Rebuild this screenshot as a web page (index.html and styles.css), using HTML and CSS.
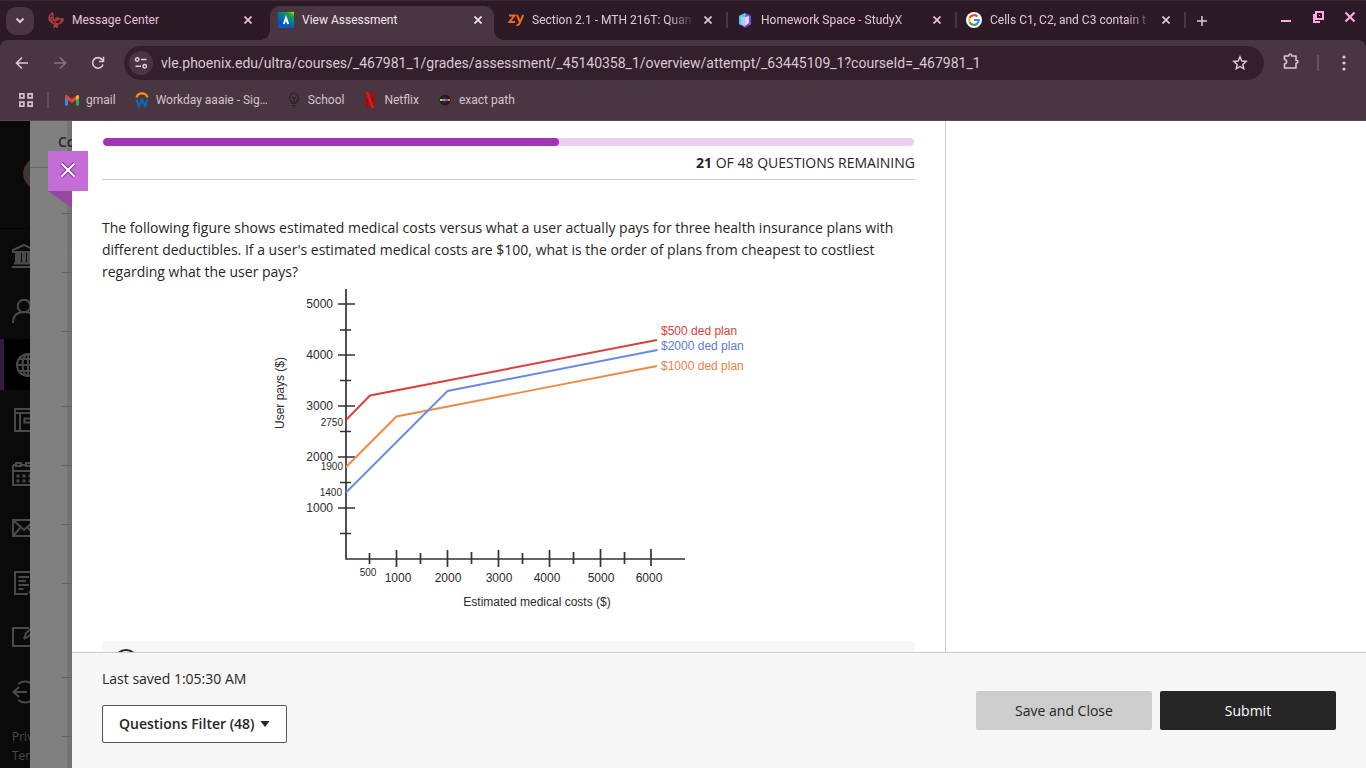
FILE: index.html
```html
<!DOCTYPE html>
<html lang="en">
<head>
<meta charset="utf-8">
<title>View Assessment</title>
<link rel="stylesheet" href="styles.css">
</head>
<body>
<header class="browser">
  <div class="tabstrip">
    <button class="tab-search" aria-label="Search tabs"><svg width="10" height="7" viewBox="0 0 10 7"><path d="M1.500 1.500 5 5l3.500-3.500" fill="none" stroke="currentColor" stroke-width="2"/></svg></button>
    <div class="tabs">
      <div class="tab">
        <svg class="fav" viewBox="0 0 16 16"><g fill="none" stroke="#a83c3c" stroke-width="1.500"><path d="M5 .5C1 3 0 6 2 9l3 2.500 3-2M4.800 1v3.500L3 6M5 4.500l.5 3.500 2.500.5M1 5l3 3M1.500 8l3.500 1.500M7 8c1-2 2-2.500 3-2l-1 2 2-1h4.500l-2 1.500h2l-3 1.500h2L10 12H6.500M7 11l-1 4.500 2-2 1 2 1-4M8.500 11v2.500"/></g></svg>
        <span class="tab-title">Message Center</span>
        <button class="tab-close" aria-label="Close tab"><svg width="8" height="8" viewBox="0 0 8 8"><path d="M.5.5l7 7m0-7l-7 7" stroke="currentColor" stroke-width="1.700"/></svg></button>
      </div>
      <div class="tab active">
        <svg class="fav" viewBox="0 0 16 16"><defs><linearGradient id="bb" x1="1" y1="0" x2=".3" y2="1"><stop offset="0" stop-color="#d8e800"/><stop offset=".2" stop-color="#24a33b"/><stop offset=".5" stop-color="#087c98"/><stop offset=".75" stop-color="#0757c4"/></linearGradient></defs><path fill="url(#bb)" d="M0 0h16v16H0z"/><path d="M5.800 12 8 6l2.200 6" fill="none" stroke="#fff" stroke-width="2"/></svg>
        <span class="tab-title">View Assessment</span>
        <button class="tab-close" aria-label="Close tab"><svg width="8" height="8" viewBox="0 0 8 8"><path d="M.5.5l7 7m0-7l-7 7" stroke="currentColor" stroke-width="1.700"/></svg></button>
      </div>
      <div class="tab split">
        <svg class="fav" viewBox="0 0 16 16"><path d="M1 3.500h5.500L1.500 10H7M9 3l3 7M15.200 3 11.500 11.500q-1 2-3 1.500" fill="none" stroke="#f26a1b" stroke-width="2"/></svg>
        <span class="tab-title">Section 2.1 - MTH 216T: Quan</span>
        <button class="tab-close" aria-label="Close tab"><svg width="8" height="8" viewBox="0 0 8 8"><path d="M.5.5l7 7m0-7l-7 7" stroke="currentColor" stroke-width="1.700"/></svg></button>
      </div>
      <div class="tab split">
        <svg class="fav" viewBox="0 0 16 16"><path fill="#6c8cf0" d="M8 1l6 3v8l-6 3.500L2 12V4z"/><path fill="#41d3ea" d="M8 1v7L2 4zM2 4l2 1v8l-2-1z"/><path fill="#7949ed" d="M8 1l6 3v8l-6 3.500 3-9z"/><path fill="#e7d3ff" d="M7.500 5.500 12 4v7l-4.500 3z"/><path fill="#b9c5ff" d="M4 4.500l3.500 1V14L4 12z"/></svg>
        <span class="tab-title">Homework Space - StudyX</span>
        <button class="tab-close" aria-label="Close tab"><svg width="8" height="8" viewBox="0 0 8 8"><path d="M.5.5l7 7m0-7l-7 7" stroke="currentColor" stroke-width="1.700"/></svg></button>
      </div>
      <div class="tab split">
        <svg class="fav" viewBox="0 0 16 16"><circle cx="8" cy="8" r="8" fill="#fff"/><g fill="none" stroke-width="2.200"><path stroke="#ea4335" d="M3.700 5.800a4.800 4.800 0 0 1 7.700-1.200"/><path stroke="#fbbc05" d="M3.700 10.200a4.800 4.800 0 0 1 0-4.400"/><path stroke="#34a853" d="M3.700 10.200a4.800 4.800 0 0 0 7.500 1.400"/><path stroke="#4285f4" d="M8 8h4.800a4.800 4.800 0 0 1-1.600 3.600"/></g></svg>
        <span class="tab-title">Cells C1, C2, and C3 contain t</span>
        <button class="tab-close" aria-label="Close tab"><svg width="8" height="8" viewBox="0 0 8 8"><path d="M.5.5l7 7m0-7l-7 7" stroke="currentColor" stroke-width="1.700"/></svg></button>
      </div>
    </div>
    <button class="new-tab" aria-label="New tab"><svg width="10" height="10" viewBox="0 0 10 10"><path d="M5 0v10M0 5h10" stroke="currentColor" stroke-width="1.500"/></svg></button>
    <div class="window-controls">
      <button aria-label="Minimize"><svg width="12" height="12" viewBox="0 0 12 12"><path d="M1 10h10" stroke="currentColor" stroke-width="2"/></svg></button>
      <button aria-label="Restore"><svg width="12" height="12" viewBox="0 0 12 12"><path d="M4 1h7v7H4zM2 3v8h6" fill="none" stroke="currentColor" stroke-width="2"/><path d="M7 4h1v1H7z" fill="currentColor"/></svg></button>
      <button aria-label="Close window"><svg width="12" height="12" viewBox="0 0 12 12"><path d="M1.500 1.500l9 9m0-9l-9 9" stroke="currentColor" stroke-width="2.200"/></svg></button>
    </div>
  </div>
  <div class="toolbar">
    <button class="tool" aria-label="Back"><svg width="14" height="14" viewBox="0 0 14 14"><path d="M13 7H2M7 1.500 1.500 7 7 12.500" fill="none" stroke="currentColor" stroke-width="1.600"/></svg></button>
    <button class="tool dim" aria-label="Forward"><svg width="14" height="14" viewBox="0 0 14 14"><path d="M1 7h11M7 1.500 12.500 7 7 12.500" fill="none" stroke="currentColor" stroke-width="1.600"/></svg></button>
    <button class="tool" aria-label="Reload"><svg width="14" height="14" viewBox="0 0 14 14"><path d="M12 8.500A5.300 5.300 0 1 1 11 3.500L12.500 5M12.500.8V5.500H8" fill="none" stroke="currentColor" stroke-width="1.600"/></svg></button>
    <div class="address">
      <button class="site-info" aria-label="Site information"><svg width="14" height="14" viewBox="0 0 14 14"><g fill="none" stroke="currentColor" stroke-width="1.500"><circle cx="3.200" cy="3.500" r="1.700"/><path d="M7 3.500h5.500M1.500 10.300H7"/><circle cx="10.700" cy="10.300" r="1.700"/></g></svg></button>
      <input class="url" type="text" aria-label="Address" value="vle.phoenix.edu/ultra/courses/_467981_1/grades/assessment/_45140358_1/overview/attempt/_63445109_1?courseId=_467981_1">
      <button class="star" aria-label="Bookmark this page"><svg width="16" height="16" viewBox="0 0 16 16"><path d="M8 1.800 9.800 6l4.400.4-3.400 3 1 4.400L8 11.500l-3.800 2.300 1-4.400-3.400-3L6.200 6z" fill="none" stroke="currentColor" stroke-width="1.400"/></svg></button>
    </div>
    <button class="tool ext" aria-label="Extensions"><svg width="18" height="18" viewBox="0 0 18 18"><path d="M2.500 4h4.200q.2-2 1.500-2t1.500 2h4.300v4.300q2 .2 2 1.500t-2 1.500v4.700H2.500v-4q2.200-.5 2.200-2.300t-2.200-2.200z" fill="none" stroke="currentColor" stroke-width="1.600" stroke-linejoin="round"/></svg></button>
    <span class="divider"></span>
    <button class="tool menu" aria-label="Menu"><svg width="4" height="16" viewBox="0 0 4 16"><g fill="currentColor"><circle cx="2" cy="2" r="1.600"/><circle cx="2" cy="8" r="1.600"/><circle cx="2" cy="14" r="1.600"/></g></svg></button>
  </div>
  <nav class="bookmarks" aria-label="Bookmarks">
    <button class="apps" aria-label="Apps"><svg width="14" height="14" viewBox="0 0 14 14"><g fill="none" stroke="currentColor" stroke-width="1.700"><path d="M.9.9h4v4h-4zM9.100.9h4v4h-4zM.9 9.100h4v4h-4zM9.100 9.100h4v4h-4z"/></g></svg></button>
    <span class="divider"></span>
    <a class="bookmark" href="#"><svg class="fav" viewBox="0 0 16 16"><path fill="#4285f4" d="M1 5l3 2v6.500H1z"/><path fill="#34a853" d="M15 5l-3 2v6.500h3z"/><path fill="#fbbc04" d="M12 4q3-2.500 3 1v1l-3 2z"/><path fill="#ea4335" d="M1 6V4.500Q1 1.500 4 4l4 3 4-3v4l-4 3-4-3z"/></svg>gmail</a>
    <a class="bookmark" href="#"><svg class="fav" viewBox="0 0 16 16"><path d="M2.500 5.500a5.700 5.700 0 0 1 11 0" fill="none" stroke="#f5900c" stroke-width="2.200"/><path d="M2.500 7.500 5 14 8 8l3 6 2.500-6.500" fill="none" stroke="#0868b9" stroke-width="2.300"/></svg>Workday aaaie - Sig…</a>
    <a class="bookmark" href="#"><svg class="fav" viewBox="0 0 16 16"><path d="M6 11.500C6 9 3.500 8.500 3.500 5.500a4.500 4.500 0 0 1 9 0c0 3-2.500 3.500-2.500 6zM6 13.500h4M7 15.500h2M8 11V6M6 5l2 2 2-2" fill="none" stroke="#272025" stroke-width="1.200"/></svg>School</a>
    <a class="bookmark" href="#"><svg class="fav" viewBox="0 0 16 16"><path fill="#a90710" d="M3.500 0h3v16l-3 .3zM9.500 0h3v16.300l-3-.3z"/><path fill="#ed1018" d="M3.500 0h3l6 16.300-3-.3z"/></svg>Netflix</a>
    <a class="bookmark" href="#"><svg class="fav" viewBox="0 0 16 16"><circle cx="8" cy="8" r="5.500" fill="#211b20"/><path d="M6.500 6h3M6.500 10h3" stroke="#50424b"/><path fill="#b9d42b" d="M3 7h2v2H3z"/><path fill="#20bdd8" d="M5 7h3v2H5z"/><path fill="#ed218b" d="M8 7h3v2H8z"/><path fill="#f58233" d="M11 7h2v2h-2z"/></svg>exact path</a>
  </nav>
</header>
<div class="page">
  <aside class="rail">
    <div class="profile"><span class="avatar"></span></div>
    <nav class="rail-nav" aria-label="Main">
      <a href="#" aria-label="Institution"><svg viewBox="0 0 24 24"><path d="M1 6 12 1l11 5v2H1zM4 8v11M8 8v11M6 8v11M11 8v11M13 8v11M16 8v11M18 8v11M20 8v11M2 19.500h20M0 23h24"/></svg></a>
      <a href="#" aria-label="Profile"><svg viewBox="0 0 24 24"><circle cx="12" cy="7" r="6.300"/><path d="M1 24q0-11 11-11t11 11"/></svg></a>
      <a href="#" class="current" aria-label="Activity"><svg class="globe" viewBox="0 0 24 24"><circle cx="12" cy="12" r="11"/><path d="M12 1v22M1 12h22M3 6h18M3 18h18"/><ellipse cx="12" cy="12" rx="5.500" ry="11"/></svg></a>
      <a href="#" aria-label="Courses"><svg viewBox="0 0 24 24"><path d="M3 1h21v22H3zM3 5h21M8 5v18M12.500 10.500H24v4H12.500z"/></svg></a>
      <a href="#" aria-label="Calendar"><svg viewBox="0 0 24 24"><path d="M1 3h3M9 3h5M1 3v20h22V3M1 9h22"/><path d="M4 1h5v3H4zM14 1h5v3h-5z"/><path d="M4.500 14h3m3 0h3m3 0h3m-15 5h3m3 0h3m3 0h3" stroke-width="3"/></svg></a>
      <a href="#" aria-label="Messages"><svg viewBox="0 0 24 24"><path d="M1 4h22v16H1zM1 4l11 10L23 4M1 20l8-9M23 20l-8-9"/></svg></a>
      <a href="#" aria-label="Grades"><svg viewBox="0 0 24 24"><path d="M16 23H3V1h18v15M6.500 6H17M6.500 10H14M6.500 14H17M6.500 18h5M17 22l3-3"/></svg></a>
      <a href="#" aria-label="Tools"><svg viewBox="0 0 24 24"><path d="M17 3H1v18h22M12 14l2-6 8-7M12 14l5-3 7-7"/></svg></a>
      <a href="#" aria-label="Sign out"><svg viewBox="0 0 24 24"><path d="M6 4a11 11 0 0 1 15 1M6 20a11 11 0 0 0 15-1M15 12H1M7 7l-5.500 5L7 17"/></svg></a>
    </nav>
    <div class="rail-links"><a href="#">Privacy</a><a href="#">Terms</a></div>
  </aside>
  <section class="underlay" aria-hidden="true">
    <div class="underlay-head">Course</div>
    <svg class="row-lines" width="10" height="600" viewBox="0 168 10 600"><path d="M0 213.500h10M0 272.500h10M0 331.500h10M0 406.500h10M0 465.500h10M0 524.500h10M0 583.500h10M0 677.500h10M0 736.500h10" stroke="#606060"/></svg>
  </section>
  <main class="panel">
    <button class="panel-close" aria-label="Close assessment"><svg width="16" height="16" viewBox="0 0 16 16"><path d="M1.500 1.500l13 13m0-13l-13 13" stroke="#82319a" stroke-width="4"/><path d="M1.500 1.500l13 13m0-13l-13 13" stroke="#fff" stroke-width="2"/></svg></button>
    <div class="content">
      <section class="questions">
        <div class="progress" role="progressbar" aria-label="Questions answered" aria-valuemin="0" aria-valuemax="48" aria-valuenow="27"><div class="progress-fill" style="width:56.25%"></div></div>
        <p class="remaining"><b>21</b> OF 48 QUESTIONS REMAINING</p>
        <p class="prompt">The following figure shows estimated medical costs versus what a user actually pays for three health insurance plans with different deductibles. If a user's estimated medical costs are $100, what is the order of plans from cheapest to costliest regarding what the user pays?</p>
        <svg class="chart" width="481" height="334" viewBox="268 283 481 334" role="img" aria-label="User pays versus estimated medical costs">
          <g class="axis">
            <path d="M346 289v270h339"/>
            <path d="M338 304h17M338 355h17M338 406h17M338 457h17M338 508h17M340 330h11M340 380.500h11M340 431.500h11M340 482.500h11M340 533.500h11"/>
            <path d="M396.500 550v17M447.500 550v17M498.500 550v17M549.500 550v17M600.500 549v18M651 549v17M369.500 553v11M420.500 553v11M471.500 552v12M522.500 553v11M573.500 552v12M624.500 552v12"/>
          </g>
          <g fill="none" stroke-width="1.900">
            <path stroke="#ed8947" d="M346 467l50.500-50.500L657 366"/>
            <path stroke="#678ae6" d="M346 492.500 447.500 391 657.500 350"/>
            <path stroke="#dd3e39" d="M346 420l24-24.500 287-55.500"/>
          </g>
          <g class="labels" text-anchor="end">
            <text x="333" y="308">5000</text><text x="333" y="359">4000</text><text x="333" y="410">3000</text><text x="333" y="461">2000</text><text x="333" y="512">1000</text>
          </g>
          <g class="labels small" text-anchor="end">
            <text x="343" y="426">2750</text><text x="343" y="470">1900</text><text x="342" y="496">1400</text>
          </g>
          <g class="labels" text-anchor="middle">
            <text class="mid" x="368" y="576">500</text>
            <text x="398" y="582">1000</text><text x="448" y="582">2000</text><text x="499" y="582">3000</text><text x="547" y="582">4000</text><text x="601" y="582">5000</text><text x="649" y="582">6000</text>
            <text x="537" y="606">Estimated medical costs ($)</text>
            <text transform="translate(284 393) rotate(-90)">User pays ($)</text>
          </g>
          <g class="labels">
            <text x="661" y="335" class="red">$500 ded plan</text><text x="661" y="350" class="blue">$2000 ded plan</text><text x="661" y="370" class="orange">$1000 ded plan</text>
          </g>
        </svg>
        <label class="answer"><input type="radio" name="answer" aria-label="Answer A"></label>
      </section>
      <aside class="side"></aside>
    </div>
    <footer class="actions">
      <div class="status">
        <span>Last saved 1:05:30 AM</span>
        <button class="filter">Questions Filter (48)<svg width="10" height="6" viewBox="0 0 10 6"><path d="M.5 0h9L5 6z" fill="currentColor"/></svg></button>
      </div>
      <div class="buttons">
        <button class="btn save">Save and Close</button>
        <button class="btn submit">Submit</button>
      </div>
    </footer>
  </main>
</div>
</body>
</html>
```
FILE: styles.css
```css
* { box-sizing: border-box; }
body {
  margin: 0;
  height: 100vh;
  display: flex;
  flex-direction: column;
  overflow: hidden;
  font-family: "Open Sans", "Noto Sans", sans-serif;
  font-size: 14px;
  color: #262626;
}
button {
  font: inherit;
  color: inherit;
  border: 0;
  padding: 0;
  margin: 0;
  background: none;
  display: flex;
  align-items: center;
  justify-content: center;
}
a { color: inherit; text-decoration: none; }
p { margin: 0; }
svg { flex: none; }

/* Browser chrome */
.browser {
  flex: none;
  background: #2c1a27;
  color: #e6c4d7;
  font-family: Roboto, sans-serif;
  font-size: 12px;
}
.tabstrip {
  height: 40px;
  display: flex;
  align-items: center;
  border-top: 1px solid #3b2935;
}
.tab-search {
  width: 28px;
  height: 28px;
  margin: 0 6px;
  border-radius: 10px;
  background: #4a3641;
}
.tabs { display: flex; align-self: stretch; }
.tab {
  position: relative;
  width: 230px;
  padding: 0 18px 2px 8px;
  display: flex;
  align-items: center;
  gap: 8px;
}
.tab.split { width: 229px; padding-right: 17px; }
.fav { width: 16px; height: 16px; }
.tab-title {
  flex: 1;
  overflow: hidden;
  white-space: nowrap;
}
.tab.split .tab-title {
  mask-image: linear-gradient(to right, #000 calc(100% - 28px), transparent);
}
.tab-close { width: 8px; height: 16px; }
.tab.split::after {
  content: "";
  position: absolute;
  right: 1px;
  top: 11px;
  width: 2px;
  height: 16px;
  background: #4a3641;
}
.tab.active {
  width: 224px;
  margin: 5px 6px 0 0;
  padding: 0 12px 7px 8px;
  border-radius: 10px 10px 0 0;
  background: #4a3641;
  color: #f6e5ef;
}
.tab.active::before,
.tab.active::after {
  content: "";
  position: absolute;
  bottom: 0;
  width: 10px;
  height: 10px;
}
.tab.active::before {
  right: 100%;
  background: radial-gradient(circle at 0 0, transparent 10px, #4a3641 10px);
}
.tab.active::after {
  left: 100%;
  background: radial-gradient(circle at 100% 0, transparent 10px, #4a3641 10px);
}
.new-tab { width: 24px; height: 24px; margin-left: 3px; }
.window-controls {
  margin-left: auto;
  padding: 0 10px 7px 0;
  display: flex;
  gap: 20px;
  color: #ffa8e4;
}
.toolbar {
  height: 41px;
  padding: 0 14px;
  display: flex;
  align-items: center;
  border-radius: 8px 8px 0 0;
  background: #4a3641;
}
.tool { width: 16px; height: 28px; margin-right: 22px; }
.tool.dim { color: #8b7280; }
.address {
  flex: 1;
  height: 34px;
  margin-top: 4px;
  padding: 0 16px 0 5px;
  display: flex;
  align-items: center;
  gap: 8px;
  border-radius: 17px;
  background: #33202c;
  color: #e2cfda;
}
.tool.dim + .tool { margin-right: 18px; }
.toolbar .tool, .toolbar .divider { margin-top: 4px; }
.site-info {
  width: 24px;
  height: 24px;
  border-radius: 12px;
  background: #4a3641;
}
.url {
  flex: 1;
  min-width: 0;
  border: 0;
  padding: 0;
  outline: 0;
  background: none;
  color: #dac9d3;
  font-family: Roboto, sans-serif;
  font-size: 14px;
}
.tool.ext { margin: 0 17px 0 18px; width: 18px; }
.tool.menu { margin-right: 0; margin-left: 17px; }
.divider { width: 2px; height: 16px; background: #67505c; }
.bookmarks {
  height: 40px;
  padding: 0 19px 2px;
  display: flex;
  align-items: center;
  gap: 18px;
  background: #4a3641;
  border-bottom: 1px solid #5a4852;
  color: #d6c1cc;
}
.bookmarks .apps { margin-right: -4px; }
.bookmarks .divider { margin-right: -3px; }
.bookmark { display: flex; align-items: center; gap: 6px; }

/* Page behind the panel */
.page { flex: 1; min-height: 0; display: flex; background: #808080; }
.rail {
  width: 30px;
  overflow: hidden;
  display: flex;
  flex-direction: column;
  background: #0a0a0a;
  color: #4a4a4a;
}
.profile {
  height: 108px;
  padding: 36px 0 0 23px;
  border-bottom: 1px solid #040404;
}
.avatar {
  display: block;
  width: 33px;
  height: 33px;
  border: 1px solid #6d2020;
  border-radius: 50%;
  background: #393939;
}
.rail-nav { flex: 1; display: grid; grid-auto-rows: 1fr; }
.rail-nav a { display: flex; align-items: center; padding-left: 12px; }
.rail-nav svg {
  width: 24px;
  height: 24px;
  fill: none;
  stroke: currentColor;
  stroke-width: 2;
}
.rail-nav .current {
  margin: 1px 0 2px;
  border-left: 4px solid #351a40;
  background: #000;
}
.rail-links {
  height: 49px;
  padding: 8px 0 0 12px;
  display: flex;
  flex-direction: column;
  font-size: 12px;
  line-height: 19px;
}
.underlay {
  width: 42px;
  overflow: hidden;
  display: flex;
  flex-direction: column;
  align-items: flex-end;
  background: linear-gradient(to right, #808080 37px, #767676 37px, #707070);
}
.underlay-head {
  align-self: stretch;
  height: 47px;
  padding-left: 28px;
  line-height: 42px;
  font-weight: 600;
  border-bottom: 1px solid #666;
}

/* Assessment panel */
.panel {
  position: relative;
  flex: 1;
  min-width: 0;
  display: flex;
  flex-direction: column;
  background: #fff;
}
.panel-close {
  position: absolute;
  left: -24px;
  top: 30px;
  width: 40px;
  height: 40px;
  padding-bottom: 2px;
  background: #c46dd6;
}
.panel-close::after {
  content: "";
  position: absolute;
  left: 0;
  top: 100%;
  width: 24px;
  height: 17px;
  background: #93499f;
  clip-path: polygon(0 0, 100% 0, 100% 100%);
}
.content { flex: 1; min-height: 0; display: flex; overflow: hidden; }
.questions {
  flex: 1;
  padding: 17px 30px 0;
  display: flex;
  flex-direction: column;
  border-right: 1px solid #ccc;
}
.side { width: 420px; }
.progress {
  flex: none;
  height: 8px;
  margin: 0 1px;
  border-radius: 4px;
  overflow: hidden;
  background: #eccff0;
}
.progress-fill { height: 100%; border-radius: 4px; background: #a234b5; }
.remaining {
  padding: 6px 0 5px;
  line-height: 22px;
  text-align: right;
  border-bottom: 1px solid #ccc;
}
.prompt { margin-top: 37px; line-height: 22px; }
.chart {
  align-self: center;
  font-family: "Liberation Sans", Arial, sans-serif;
  font-size: 12px;
}
.axis { fill: none; stroke: #333; stroke-width: 1.700; }
.labels { fill: #2b2b2b; }
.labels.small,
.labels .mid { font-size: 10px; }
.labels .red { fill: #dd3e39; }
.labels .blue { fill: #5b7bdc; }
.labels .orange { fill: #e98240; }
.answer {
  flex: none;
  height: 60px;
  margin-top: 24px;
  padding: 8px 12px;
  border-radius: 2px;
  background: #f7f7f7;
}
.answer input {
  appearance: none;
  width: 24px;
  height: 24px;
  margin: 0;
  border: 2px solid #262626;
  border-radius: 50%;
  background: #fff;
}
.actions {
  padding: 15px 30px 25px;
  display: flex;
  align-items: flex-end;
  justify-content: space-between;
  background: #f7f7f7;
  border-top: 1px solid #ccc;
}
.status {
  display: flex;
  flex-direction: column;
  align-items: flex-start;
  gap: 15px;
  line-height: 22px;
}
.filter {
  height: 38px;
  padding: 0 16px;
  gap: 5px;
  border: 1px solid #555;
  border-radius: 2px;
  background: #fff;
  font-weight: 600;
}
.buttons { display: flex; gap: 8px; padding-bottom: 13px; }
.btn { width: 176px; height: 39px; padding-bottom: 1px; border-radius: 2px; }
.save { background: #cdcdcd; }
.submit { background: #262626; color: #fff; }
```
